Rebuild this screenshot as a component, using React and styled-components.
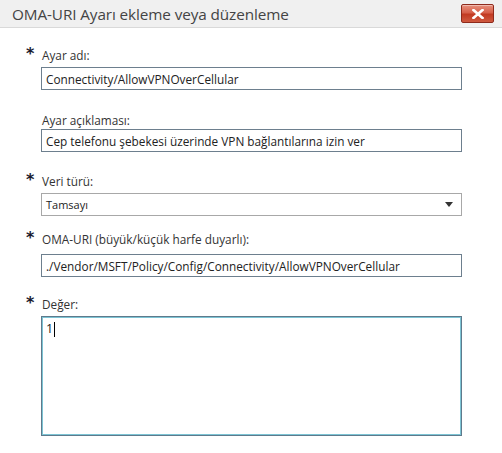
import React from "react";
import styled, { createGlobalStyle } from "styled-components";

const Global = createGlobalStyle`
  html, body {
    margin: 0;
    padding: 0;
    background: #fff;
  }
  body {
    font-family: "Open Sans", "Noto Sans", sans-serif;
    color: #222;
  }
  * {
    box-sizing: border-box;
  }
`;

const Dialog = styled.div`
  width: 502px;
  height: 453px;
  background: #fff;
  overflow: hidden;
`;

const TitleBar = styled.div`
  height: 28px;
  display: flex;
  align-items: center;
  justify-content: space-between;
  padding: 0 8px 0 12px;
  background: #f0f0f0;
  border-bottom: 1px solid #d9d9d9;
`;

const Title = styled.h1`
  margin: 0;
  font-size: 15.3px;
  font-weight: 400;
  color: #444;
  letter-spacing: -0.1px;
`;

const CloseButton = styled.button`
  width: 33px;
  height: 19px;
  padding: 0;
  border: 1px solid #8e2a1c;
  border-radius: 2px;
  background: linear-gradient(#e8907d 0%, #d6604a 45%, #c23a22 55%, #cf5a40 100%);
  display: flex;
  align-items: center;
  justify-content: center;
  box-shadow: inset 0 1px 0 rgba(255, 255, 255, 0.4);
`;

const Form = styled.div`
  padding: 18px 40px 0 26px;
  display: flex;
  flex-direction: column;
`;

const Field = styled.div`
  display: flex;
  flex-direction: column;
  margin-bottom: ${(p) => p.gap || 0}px;
`;

const LabelRow = styled.div`
  display: flex;
  align-items: flex-start;
  height: ${(p) => p.h || 21}px;
`;

const Star = styled.span`
  width: 16px;
  font-size: 16px;
  font-weight: 700;
  line-height: 16px;
  color: #1a1a2e;
  font-family: "DejaVu Sans", sans-serif;
  visibility: ${(p) => (p.show ? "visible" : "hidden")};
`;

const Label = styled.label`
  font-size: 11.8px;
  line-height: 18px;
  color: #333;
`;

const Box = styled.div`
  margin-left: 15px;
  height: 23px;
  border: 1px solid ${(p) => (p.light ? "#a8a8a8" : "#6d7f8e")};
  background: #fff;
  display: flex;
  align-items: center;
  justify-content: space-between;
  padding: 0 6px 0 4px;
  font-size: ${(p) => (p.small ? "11px" : "11.8px")};
  color: #222;
  white-space: nowrap;
  overflow: hidden;
`;

const Caret = styled.span`
  width: 0;
  height: 0;
  border-left: 4px solid transparent;
  border-right: 4px solid transparent;
  border-top: 5px solid #333;
  margin-right: 2px;
`;

const TextArea = styled.div`
  margin-left: 15px;
  height: 120px;
  border: 1px solid #5f7a8c;
  box-shadow: inset 0 0 0 1px #7cc4d4;
  padding: 3px 4px;
  font-size: 12.5px;
  color: #222;
  display: flex;
  align-items: flex-start;
`;

const Cursor = styled.span`
  display: inline-block;
  width: 1px;
  height: 15px;
  background: #000;
  margin-left: 1px;
  margin-top: 2px;
`;

const fields = [
  { label: "Ayar adı:", value: "Connectivity/AllowVPNOverCellular", req: true, gap: 21, h: 21 },
  { label: "Ayar açıklaması:", value: "Cep telefonu şebekesi üzerinde VPN bağlantılarına izin ver", req: false, gap: 20, h: 18 },
];

const App = () => {
  return (
    <Dialog>
      <Global />
      <TitleBar>
        <Title>OMA-URI Ayarı ekleme veya düzenleme</Title>
        <CloseButton aria-label="Kapat">
          <svg width="12" height="10" viewBox="0 0 12 10">
            <path d="M1.5 1 L10.5 9 M10.5 1 L1.5 9" stroke="#fff" strokeWidth="2.6" strokeLinecap="square" />
          </svg>
        </CloseButton>
      </TitleBar>
      <Form>
        {fields.map((f) => (
          <Field key={f.label} gap={f.gap}>
            <LabelRow h={f.h}>
              <Star show={f.req}>*</Star>
              <Label>{f.label}</Label>
            </LabelRow>
            <Box>{f.value}</Box>
          </Field>
        ))}
        <Field gap={14}>
          <LabelRow>
            <Star show>*</Star>
            <Label>Veri türü:</Label>
          </LabelRow>
          <Box light small>
            Tamsayı
            <Caret />
          </Box>
        </Field>
        <Field gap={18}>
          <LabelRow h={24}>
            <Star show>*</Star>
            <Label>OMA-URI (büyük/küçük harfe duyarlı):</Label>
          </LabelRow>
          <Box>./Vendor/MSFT/Policy/Config/Connectivity/AllowVPNOverCellular</Box>
        </Field>
        <Field>
          <LabelRow>
            <Star show>*</Star>
            <Label>Değer:</Label>
          </LabelRow>
          <TextArea>
            1<Cursor />
          </TextArea>
        </Field>
      </Form>
    </Dialog>
  );
};

export default App;
